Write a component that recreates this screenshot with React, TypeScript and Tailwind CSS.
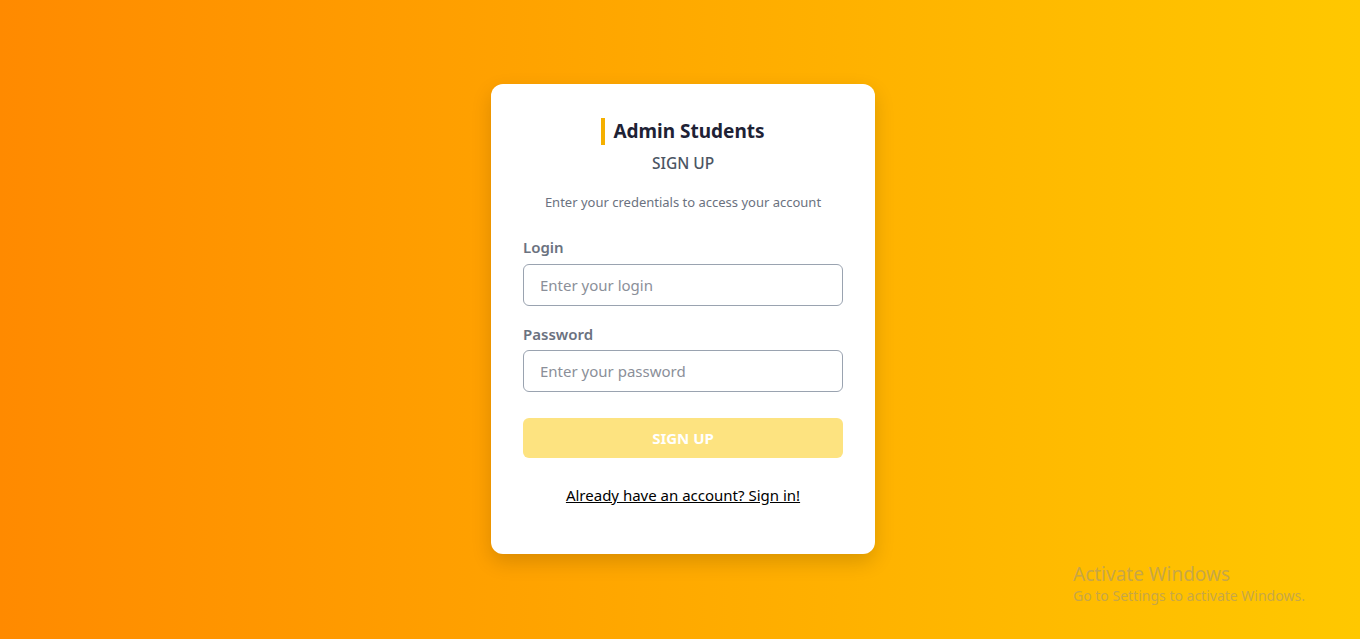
import React from "react";

export default function App() {
  return (
    <div
      className="relative min-h-[639px] w-full flex justify-center items-start pl-[6px] bg-gradient-to-r from-[#ff8a00] to-[#ffc800]"
      style={{ fontFamily: '"Noto Sans", "Open Sans", sans-serif' }}
    >
      <div className="mt-[84px] w-[384px] h-[470px] bg-white rounded-[12px] shadow-[0_8px_20px_rgba(0,0,0,0.15)] px-8 pt-[34px] flex flex-col">
        <div className="flex items-center justify-center gap-[8px]">
          <span className="w-[4px] h-[27px] bg-[#f5b000]" />
          <h1 className="text-[19px] leading-[27px] font-bold text-[#1e2235]">Admin Students</h1>
        </div>
        <div className="mt-[8px] text-center text-[15.5px] leading-[20px] font-medium text-[#4b5563]">SIGN UP</div>
        <p className="mt-[20px] text-center text-[13px] leading-[18px] text-[#6b7280]">
          Enter your credentials to access your account
        </p>
        <label className="mt-[26px] text-[15px] leading-[20px] font-semibold text-[#6b7280]">Login</label>
        <input
          className="mt-[7px] h-[42px] w-full rounded-[6px] border border-[#9aa3b0] px-4 text-[15px] text-[#374151] placeholder:text-[#8b8f99] outline-none"
          placeholder="Enter your login"
        />
        <label className="mt-[18px] text-[15px] leading-[20px] font-semibold text-[#6b7280]">Password</label>
        <input
          type="password"
          className="mt-[6px] h-[42px] w-full rounded-[6px] border border-[#9aa3b0] px-4 text-[15px] text-[#374151] placeholder:text-[#8b8f99] outline-none"
          placeholder="Enter your password"
        />
        <button className="mt-[26px] h-[40px] w-full rounded-[6px] bg-[#fde380] text-white text-[15px] font-bold">
          SIGN UP
        </button>
        <div className="mt-[25px] text-center">
          <a href="#" className="text-[15px] leading-[20px] text-black underline">
            Already have an account? Sign in!
          </a>
        </div>
      </div>
      <div className="absolute left-[1073px] top-[562px] text-[#b9a05a]/80 pointer-events-none">
        <div className="text-[19px] leading-[24px]">Activate Windows</div>
        <div className="text-[14px] leading-[20px]">Go to Settings to activate Windows.</div>
      </div>
    </div>
  );
}
